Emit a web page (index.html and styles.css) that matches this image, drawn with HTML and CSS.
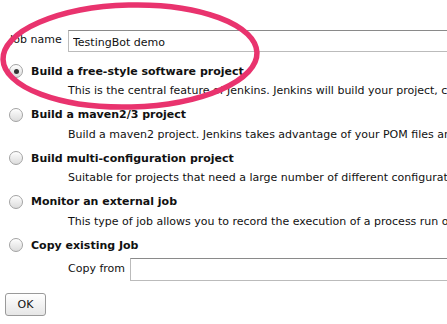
FILE: index.html
```html
<!DOCTYPE html>
<html lang="en">
<head>
    <meta charset="UTF-8">
    <title>New Job</title>
    <link rel="stylesheet" href="styles.css">
</head>
<body>
    <form class="new-job">
        <div class="job-name">
            <label for="name">Job name</label>
            <input type="text" id="name" class="field" value="TestingBot demo">
        </div>

        <div class="option">
            <label class="option-title"><input type="radio" name="mode" checked> Build a free-style software project</label>
            <p class="option-desc">This is the central feature of Jenkins. Jenkins will build your project, combining any SCM with any build system.</p>
        </div>
        <div class="option">
            <label class="option-title"><input type="radio" name="mode"> Build a maven2/3 project</label>
            <p class="option-desc">Build a maven2 project. Jenkins takes advantage of your POM files and drastically reduces the configuration.</p>
        </div>
        <div class="option">
            <label class="option-title"><input type="radio" name="mode"> Build multi-configuration project</label>
            <p class="option-desc">Suitable for projects that need a large number of different configurations, such as testing on multiple environments.</p>
        </div>
        <div class="option">
            <label class="option-title"><input type="radio" name="mode"> Monitor an external job</label>
            <p class="option-desc">This type of job allows you to record the execution of a process run outside Jenkins, even on a remote machine.</p>
        </div>
        <div class="option">
            <label class="option-title"><input type="radio" name="mode"> Copy existing Job</label>
            <div class="copy-from">
                <span>Copy from</span>
                <input type="text" class="field">
            </div>
        </div>

        <button type="button" class="ok">OK</button>
    </form>

    <!-- highlight ring drawn over the form -->
    <svg class="ring" width="447" height="324" viewBox="0 0 447 324">
        <ellipse cx="130" cy="56" rx="127" ry="51" transform="rotate(-1.5 130 56)"
                 fill="none" stroke="#e9336e" stroke-width="5.5"/>
    </svg>
</body>
</html>
```

FILE: styles.css
```css
* {
    box-sizing: border-box;
    margin: 0;
}

body {
    font-family: "DejaVu Sans", Verdana, sans-serif;
    font-size: 11px;
    color: #111;
    background: white;
    overflow: hidden;
    position: relative;
    height: 324px;
}

.new-job {
    padding: 30px 0 0 5px;
    white-space: nowrap;
}

/* job name */
.job-name {
    display: flex;
    align-items: flex-start;
    height: 22px;
    margin-bottom: 9px;
}

.job-name label {
    flex: none;
    width: 63px;
    padding: 3px 0 0 5px;
    line-height: 14px;
}

.field {
    flex: none;
    font: inherit;
    color: #111;
    width: 600px;
    height: 22px;
    border: 1px solid #bbb;
    border-top-color: #8a8a8a;
    padding: 2px 4px 0;
    outline: none;
}

/* options */
.option {
    margin-bottom: 4.5px;
}

.option-title {
    display: flex;
    align-items: center;
    gap: 8px;
    height: 20px;
    font-weight: bold;
    padding-left: 4px;
}

.option-title input {
    flex: none;
    appearance: none;
    width: 14px;
    height: 14px;
    margin: 0;
    border-radius: 50%;
    border: 1px solid #a3a3a3;
    background: linear-gradient(#fdfdfd, #dcdcdc);
    box-shadow: inset 0 1px 1px rgba(255,255,255,0.8);
    position: relative;
}

.option-title input:checked::after {
    content: '';
    position: absolute;
    left: 3.5px;
    top: 3.5px;
    width: 5px;
    height: 5px;
    border-radius: 50%;
    background: #333;
}

.option-desc {
    padding-left: 63px;
    line-height: 19px;
}

.copy-from {
    display: flex;
    align-items: flex-start;
    padding: 3px 0 0 63px;
    height: 28px;
}

.copy-from span {
    flex: none;
    width: 62px;
    line-height: 14px;
    padding-top: 4px;
}

.copy-from .field {
    height: 23px;
}

.ok {
    font: inherit;
    color: #111;
    width: 41px;
    height: 23px;
    margin-top: 5px;
    border: 1px solid #9a9a9a;
    border-radius: 3px;
    background: linear-gradient(#ffffff, #e6e6e6);
    padding: 0;
}

/* highlight overlay */
.ring {
    position: absolute;
    left: 0;
    top: 0;
    pointer-events: none;
}
```
